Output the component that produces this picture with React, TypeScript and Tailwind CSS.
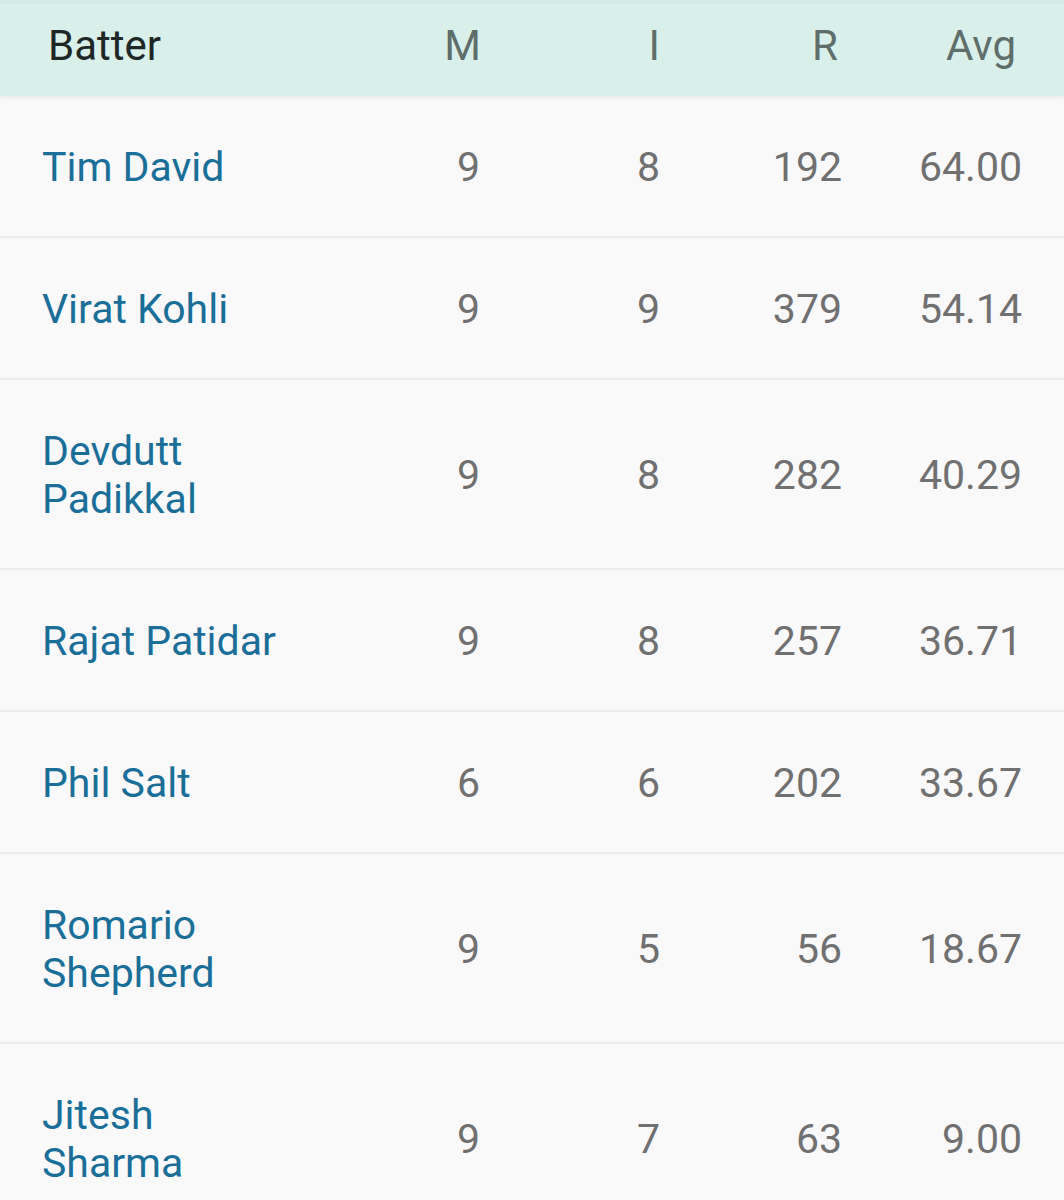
const rows = [
  { name: ["Tim David"], m: "9", i: "8", r: "192", avg: "64.00" },
  { name: ["Virat Kohli"], m: "9", i: "9", r: "379", avg: "54.14" },
  { name: ["Devdutt", "Padikkal"], m: "9", i: "8", r: "282", avg: "40.29" },
  { name: ["Rajat Patidar"], m: "9", i: "8", r: "257", avg: "36.71" },
  { name: ["Phil Salt"], m: "6", i: "6", r: "202", avg: "33.67" },
  { name: ["Romario", "Shepherd"], m: "9", i: "5", r: "56", avg: "18.67" },
  { name: ["Jitesh", "Sharma"], m: "9", i: "7", r: "63", avg: "9.00" },
];

export default function App() {
  return (
    <div className="min-h-[1200px] bg-[#f9f9fa]" style={{ fontFamily: "Roboto, 'Noto Sans', sans-serif" }}>
      <div className="flex h-[96px] items-center border-t-4 border-[#d3ebe5] bg-[#d9f0ea] pr-[42px] pb-[9px] text-[42px] text-[#5f6e6b] shadow-[0_2px_3px_rgba(0,0,0,0.06)]">
        <div className="flex-1 pl-[48px] text-[#1e2726]">Batter</div>
        <div className="w-[180px] text-right pr-[1px]">M</div>
        <div className="w-[180px] text-right pr-[2px]">I</div>
        <div className="w-[180px] text-right pr-[4px]">R</div>
        <div className="w-[180px] text-right pr-[6px]">Avg</div>
      </div>
      {rows.map((row) => (
        <div
          key={row.name.join(" ")}
          className="flex items-center border-b-2 border-[#eaeded] pt-[47px] pb-[45px] pr-[42px] leading-[48px] text-[41px]"
        >
          <div className="flex-1 pl-[42px] text-[#1a6f99]">
            {row.name.map((n) => (
              <div key={n}>{n}</div>
            ))}
          </div>
          <div className="w-[180px] text-right text-[#707070] pr-[2px]">{row.m}</div>
          <div className="w-[180px] text-right text-[#707070] pr-[2px]">{row.i}</div>
          <div className="w-[180px] text-right text-[#707070]">{row.r}</div>
          <div className="w-[180px] text-right text-[#707070]">{row.avg}</div>
        </div>
      ))}
    </div>
  );
}
